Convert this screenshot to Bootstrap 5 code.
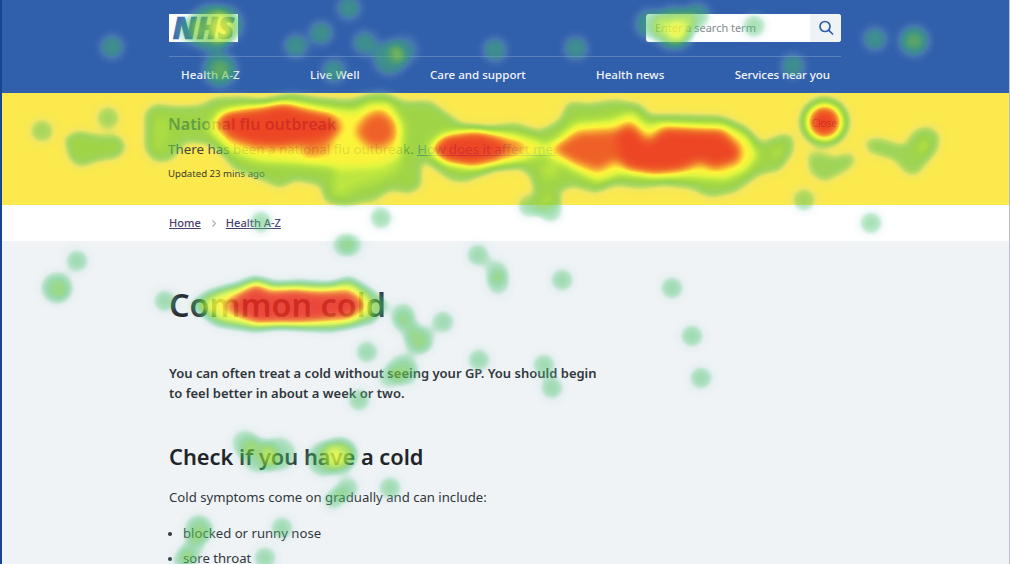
<!DOCTYPE html>
<html lang="en">
<head>
<meta charset="utf-8">
<meta name="viewport" content="width=device-width, initial-scale=1">
<title>Common cold - NHS</title>
<link href="https://cdn.jsdelivr.net/npm/bootstrap@5.3.0/dist/css/bootstrap.min.css" rel="stylesheet">
<style>
body{font-family:"Noto Sans","Open Sans",sans-serif;background:#eff3f5;color:#30373c;height:564px;overflow:hidden;font-size:13.15px;line-height:20px}
.page-frame{height:564px;border-left:2px solid #174493;border-right:1px solid #b4c0cf;overflow:hidden}
.wrap{width:672px;margin-left:167px}
.masthead{background:#305fab;height:93px}
.brandrow{height:56px;padding-top:14px}
.logo-box{width:69px;height:28px;background:#fff;color:#305fab;font:italic 800 30px/27px "Open Sans","Noto Sans",sans-serif;-webkit-text-stroke:.7px #305fab}
.searchbox{width:195px;height:28px;background:#fff;border-radius:3px;overflow:hidden;font-size:10.95px;color:#858b90}
.searchbox span{padding-left:9px}
.searchbtn{width:31px;height:28px;background:#eff3f5}
.mainnav{border-top:1px solid #5780bd;height:37px;padding:0 11px 0 12px;line-height:36px;font-size:11.55px;font-weight:500}
.mainnav a{color:#f3f6fb;text-decoration:none;white-space:nowrap}
.mainnav a:nth-child(-n+2){letter-spacing:.12px}
.mainnav a:last-child{letter-spacing:-.08px}
.alertband{background:#fbe94d;height:112px;padding-top:19px}
.alertband h2{font-size:16.1px;line-height:24px;font-weight:600;color:#4a4a3c;margin:0 0 3px -1px}
.alertband p{line-height:20px;margin:0 0 0 -1px;font-size:13.35px;color:#403e30;white-space:nowrap}
.alertband .when{font-size:9.65px;margin-top:5px}
.alertband .dismiss{font-size:10px;line-height:22px;color:#333}
.alertband a{color:#2a5a98}
.crumbs{background:#fff;height:36px;font-size:11.05px;line-height:36px}
.crumbs a{color:#49406f;font-weight:500}
h1{font-size:32.3px;line-height:40px;font-weight:600;color:#262d32;margin:43px 0 39px}
.intro{font-size:13px;font-weight:600;line-height:20px;margin:0 0 39px;white-space:nowrap}
.content h3{font-size:21.8px;line-height:30px;font-weight:600;color:#212529;margin:0 0 15px}
.content ul{line-height:25px;margin:14px 0 0;padding:0 0 0 14px}
.content li::marker{font-size:12px}
.heat{position:absolute;left:0;top:0;pointer-events:none}
</style>
</head>
<body>
<div class="page-frame">
<header class="masthead">
 <div class="wrap">
  <div class="brandrow d-flex justify-content-between">
   <div class="logo-box d-flex justify-content-center">NHS</div>
   <div class="searchbox d-flex align-items-center justify-content-between">
    <span>Enter a search term</span>
    <div class="searchbtn d-flex align-items-center justify-content-center"><svg width="16" height="16" viewBox="0 0 16 16" fill="none" stroke="#305fab" stroke-width="1.7" stroke-linecap="round"><circle cx="7" cy="6.500" r="5"/><path d="M10.800 10.300 14.600 14"/></svg></div>
   </div>
  </div>
  <nav class="mainnav d-flex justify-content-between"><a href="#">Health A-Z</a><a href="#">Live Well</a><a href="#">Care and support</a><a href="#">Health news</a><a href="#">Services near you</a></nav>
 </div>
</header>
<section class="alertband">
 <div class="wrap d-flex justify-content-between">
  <div><h2>National flu outbreak</h2>
  <p>There has been a national flu outbreak. <a href="#">How does it affect me.</a></p>
  <p class="when">Updated 23 mins ago</p></div>
  <p class="dismiss pe-1">Close</p>
 </div>
</section>
<nav class="crumbs"><div class="wrap d-flex align-items-center"><a href="#">Home</a><svg class="mx-2" width="9" height="9" viewBox="0 0 9 9" fill="none" stroke="#a5adb5" stroke-width="1.1"><path d="M3.500 1.500 6.500 4.500 3.500 7.500"/></svg><a href="#">Health A-Z</a></div></nav>
<main class="content wrap">
 <h1>Common cold</h1>
 <p class="intro">You can often treat a cold without seeing your GP. You should begin<br>to feel better in about a week or two.</p>
 <h3>Check if you have a cold</h3>
 <p class="m-0">Cold symptoms come on gradually and can include:</p>
 <ul><li>blocked or runny nose</li><li>sore throat</li></ul>
</main>
</div>
<!-- Attention heatmap: grey intensities are blurred, then mapped to a colour ramp -->
<svg class="heat" width="1010" height="564" viewBox="0 0 1010 564" aria-hidden="true">
<defs><filter id="ramp" filterUnits="userSpaceOnUse" x="-20" y="-20" width="1050" height="604" color-interpolation-filters="sRGB">
 <feGaussianBlur stdDeviation="4.700" result="b"/>
 <feComponentTransfer in="b" result="c">
  <feFuncR type="table" tableValues=".75 .7 .35 .3 .44 .63 .85 1 .96 .93 .92"/>
  <feFuncG type="table" tableValues=".88 .86 .78 .76 .79 .88 .97 .96 .6 .34 .17"/>
  <feFuncB type="table" tableValues=".9 .85 .5 .42 .27 .24 .24 .22 .18 .14 .12"/>
 </feComponentTransfer>
 <feColorMatrix in="b" type="matrix" values="0 0 0 0 0 0 0 0 0 0 0 0 0 0 0 1 0 0 0 0"/>
 <feComponentTransfer result="a"><feFuncA type="table" tableValues="0 .12 .36 .52 .66 .76 .82 .86 .86 .86 .86"/></feComponentTransfer>
 <feComposite in="c" in2="a" operator="in"/>
</filter></defs>
<g filter="url(#ramp)">
 <rect x="-20" y="-20" width="1050" height="604" fill="#000"/>
 <g fill="#666">
  <path d="M145 112 155 104 175 107 200 106 215 98 240 97 262 100 290 94 320 98 350 100 370 94 385 93 405 102 430 101 445 112 462 124 490 127 515 123 540 131 560 120 568 102 590 104 615 100 640 104 650 115 680 115 720 116 745 126 762 143 780 135 793 135 793 152 780 170 760 174 745 185 735 192 710 197 690 188 665 185 640 188 615 185 595 193 575 186 560 190 560 204 538 204 530 175 520 168 495 170 465 182 450 180 430 165 421 160 421 187 410 193 390 190 375 200 345 206 325 202 321 185 295 180 280 188 265 181 235 170 218 150 205 143 185 142 172 160 155 162 145 150Z"/>
  <path d="M188 305 206 291 236 283 255 276 277 282 300 280 330 283 350 276 370 288 389 304 374 323 330 332 280 328 255 332 215 326Z"/>
  <path d="M64 138 78 131 100 136 120 136 126 148 118 158 100 160 80 167 70 160Z"/>
  <path d="M807 152 820 153 835 157 850 152 857 160 848 170 825 182 810 174Z" opacity=".85"/>
  <path d="M864 140 880 138 904 146 914 130 928 126 940 134 938 150 916 176 904 172 895 160 868 152Z" opacity=".88"/>
  <circle cx="824.500" cy="122" r="25"/>
 </g>
 <g fill="#848484">
  <path d="M334 162 402 155 400 170 380 181 355 188 345 197 332 196Z"/>
  <path d="M154 122 164 115 171 126 162 150 154 150Z" opacity=".6"/>
  <path d="M540 165 555 160 560 175 545 180ZM775 148 783 146 780 157 772 158Z"/>
  <path d="M918 142 928 138 930 146 922 156 916 152Z"/>
 </g>
 <g fill="#b0b0b0">
  <path d="M207 128 220 111 250 105 290 101 330 108 355 111 370 103 390 103 404 125 402 155 380 166 340 168 300 164 260 162 230 152Z"/>
  <path d="M426 150 438 136 470 129 495 131 520 136 540 141 545 150 536 157 515 163 480 169 450 165 434 157Z"/>
  <path d="M536 150 558 138 575 123 610 120 632 112 648 126 660 122 700 124 725 124 747 136 758 155 747 170 725 180 690 177 655 178 620 174 598 182 580 174 558 162Z"/>
  <path d="M202 305 220 293 243 287 256 281 272 287 310 288 350 284 368 297 372 312 350 324 300 326 256 325 222 320Z"/>
  <circle cx="824.500" cy="122" r="19"/>
 </g>
 <path fill="#d8d8d8" d="M300 135 336 126 328 152 306 158ZM500 136 520 141 526 150 505 158Z"/>
 <path fill="#ececec" d="M356 132 366 117 380 111 393 121 395 137 384 147 368 146Z"/>
 <g fill="#fff">
  <path d="M216 122 228 112 258 109 282 103 305 110 332 116 341 128 330 138 305 144 280 147 255 146 230 138Z"/>
  <path d="M433 149 446 135 480 132 498 138 508 149 498 159 470 166 444 161Z"/>
  <path d="M226 305 243 292 256 285 270 292 295 289 320 293 350 292 364 305 350 317 300 322 256 323 238 315Z"/>
  <path d="M610 135 630 124 648 141 665 128 700 130 722 131 740 148 738 161 715 168 700 162 680 170 655 173 630 169 614 158Z"/>
  <circle cx="824.500" cy="122" r="14.500"/>
 </g>
 <path fill="#ededed" d="M553 149 578 133 615 131 620 158 598 170 575 162Z"/>
 <g id="spots" fill="#fff"></g>
</g>
</svg>
<script src="https://cdn.jsdelivr.net/npm/bootstrap@5.3.0/dist/js/bootstrap.bundle.min.js"></script>
<script>
// x, y, radius, optional strength
const spots=[[112,47],[349,8],[296,46],[321,33],[365,43],[334,71],[390,58,17,.29],[404,50,14,.2],[396,55,7,.12],[495,50],[576,48],[875,39],[914,41,15,.33],[914,41,7,.16],[793,66],
[220,70,17,.32],[220,70,9,.16],[188,30,15,.2],[212,28,23,.36],[226,24,18,.25],[220,30,12,.28],
[650,24,15,.28],[674,28,21,.38],[676,30,11,.48],[697,16,13,.3],[754,26,12],
[42,131],[108,118],[804,200],
[381,218],[261,222],[871,223],[529,206],[551,211],[540,208,8,.15],[343,245,12,.25],[353,245,12,.2],
[77,261],[57,288,16,.33],[60,290,8,.12],[165,301],[478,255],[497,271,12,.25],[498,284,12,.25],[562,280],[672,288],[692,336],[701,378],
[403,315,13,.27],[405,325,12,.16],[419,340,15,.32],[420,342,8,.12],[443,322],[367,352],[402,368,15,.25],[407,374,14,.15],[388,378,12,.22],[359,400],[479,360],[544,365],[552,388],
[245,443,14,.27],[258,456,18,.26],[279,454,18,.27],[268,458,11,.15],[324,459,18,.3],[340,455,18,.33],[342,455,12,.26],[348,488,12,.26],[333,500,11,.25],[341,494,9,.12],[390,488],[199,529,15,.29],[200,533,11,.12],[192,550,12,.24],[282,528],[265,558],[184,561]];
document.getElementById('spots').innerHTML=spots.map(([x,y,r=11.8,o=.29])=>`<circle cx="${x}" cy="${y}" r="${r}" fill-opacity="${o}"/>`).join('');
</script>
</body>
</html>
